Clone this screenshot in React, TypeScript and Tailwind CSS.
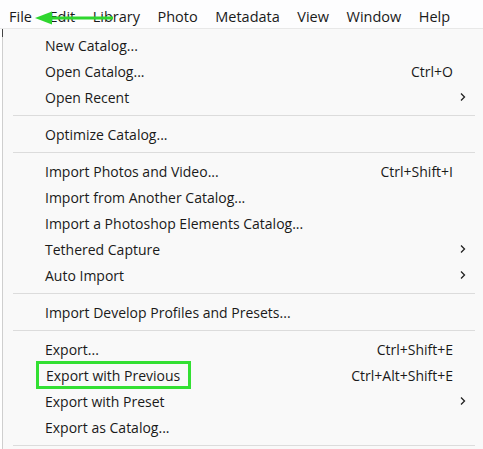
import React from "react";

type Item =
  | { sep: true }
  | { label: string; shortcut?: string; sub?: boolean; boxed?: boolean };

const items: Item[] = [
  { label: "New Catalog..." },
  { label: "Open Catalog...", shortcut: "Ctrl+O" },
  { label: "Open Recent", sub: true },
  { sep: true },
  { label: "Optimize Catalog..." },
  { sep: true },
  { label: "Import Photos and Video...", shortcut: "Ctrl+Shift+I" },
  { label: "Import from Another Catalog..." },
  { label: "Import a Photoshop Elements Catalog..." },
  { label: "Tethered Capture", sub: true },
  { label: "Auto Import", sub: true },
  { sep: true },
  { label: "Import Develop Profiles and Presets..." },
  { sep: true },
  { label: "Export...", shortcut: "Ctrl+Shift+E" },
  { label: "Export with Previous", shortcut: "Ctrl+Alt+Shift+E", boxed: true },
  { label: "Export with Preset", sub: true },
  { label: "Export as Catalog..." },
  { sep: true },
];

const menus = ["File", "Edit", "Library", "Photo", "Metadata", "View", "Window", "Help"];

function Chevron() {
  return (
    <svg width="8" height="10" viewBox="0 0 8 10" className="text-[#222]">
      <path d="M2 1.5 L5.5 5 L2 8.5" fill="none" stroke="currentColor" strokeWidth="1.3" />
    </svg>
  );
}

export default function App() {
  return (
    <div
      className="w-[483px] h-[449px] overflow-hidden bg-white text-[#1a1a1a]"
      style={{ fontFamily: '"Open Sans", "Noto Sans", sans-serif' }}
    >
      <div className="relative h-[29px] bg-[#fdfdfe] flex items-center pt-[6px] pl-[9px] gap-[17.5px] text-[14.5px] border-b border-[#e8e8e8]">
        {menus.map((m) => (
          <span key={m}>{m}</span>
        ))}
        <svg className="absolute left-[33px] top-[11px]" width="82" height="14" viewBox="0 0 82 14">
          <polygon points="2,7 19,0.5 19,13.5" fill="#2fd62f" />
          <rect x="17" y="5.5" width="63" height="3" fill="#2fd62f" />
        </svg>
      </div>
      <div className="relative bg-[#f9f9f9] ml-[2px] border-l border-[#cfcfcf] h-full pt-[3px] text-[14px]">
        <div className="absolute -left-px top-0 w-px h-[8px] bg-[#444]" />
        {items.map((it, i) =>
          "sep" in it ? (
            <div key={i} className="h-[11px] flex items-center pl-[10px] pr-[8px]">
              <div className="h-px w-full bg-[#dcdcdc]" />
            </div>
          ) : (
            <div key={i} className="h-[26px] flex items-center pl-[42px] pr-[30px]">
              <span
                className={
                  it.boxed
                    ? "h-[28px] flex items-center border-[3px] border-[#33e033] -my-px"
                    : ""
                }
                style={it.boxed ? { marginLeft: -9, paddingLeft: 7, paddingRight: 8 } : undefined}
              >
                {it.label}
              </span>
              <span className="ml-auto">{it.shortcut}</span>
              {it.sub && (
                <span className="absolute right-[16px]">
                  <Chevron />
                </span>
              )}
            </div>
          )
        )}
      </div>
    </div>
  );
}
